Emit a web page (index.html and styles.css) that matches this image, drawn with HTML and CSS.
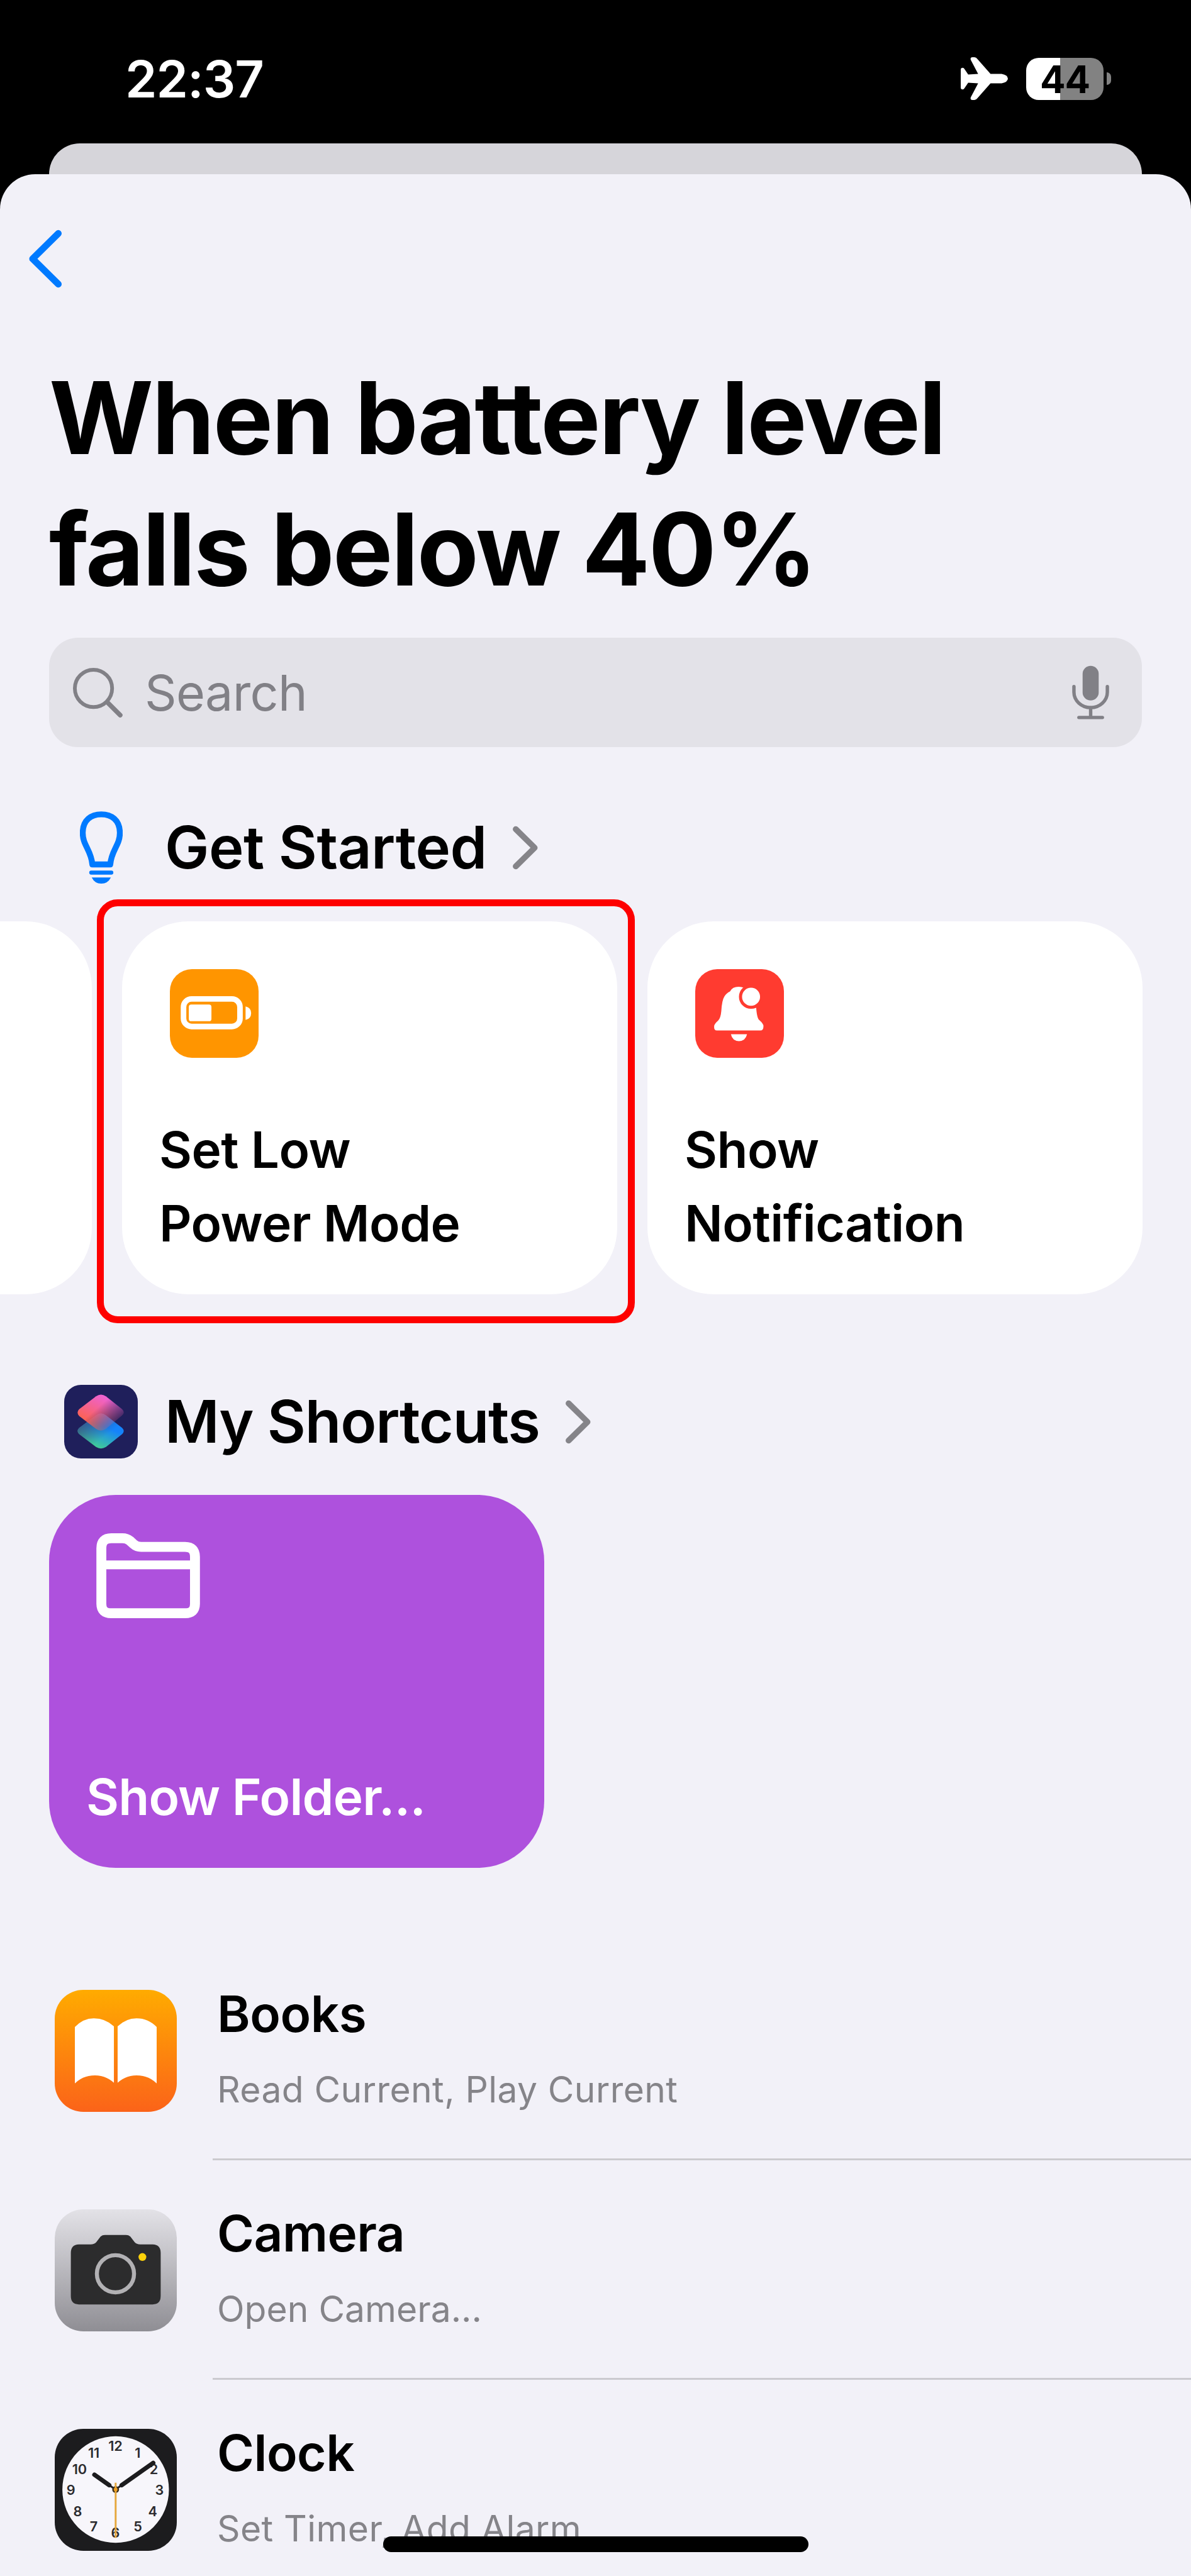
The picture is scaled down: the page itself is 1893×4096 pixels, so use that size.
FILE: index.html
```html
<!DOCTYPE html>
<html lang="en">
<head>
    <meta charset="UTF-8">
    <meta name="viewport" content="width=device-width, initial-scale=1.0">
    <title>Shortcuts - New Automation</title>
    <link rel="stylesheet" href="styles.css">
</head>
<body>
    <div class="phone">
        <header class="status-bar">
            <span class="time">22:37</span>
            <div class="status-icons">
                <svg class="plane" viewBox="0 0 76 69" fill="#fff">
                    <path d="M0 20 Q0 17 3 17 Q5 17 6 19 L12 28 L28 27 L16 4 Q15 0 19 0 L22 0 Q25 0 27 3 L48 27 L66 27 Q76 29 76 34.500 Q76 40 66 42 L48 42 L27 66 Q25 69 22 69 L19 69 Q15 69 16 65 L28 42 L12 41 L6 50 Q5 52 3 52 Q0 52 0 49 Z"/>
                </svg>
                <div class="battery"><span>44</span></div>
                <div class="battery-cap"></div>
            </div>
        </header>
        <div class="back-sheet"></div>

        <main class="sheet">
            <svg class="back" viewBox="0 0 56 94" fill="none" stroke="#007aff" stroke-width="11" stroke-linecap="round" stroke-linejoin="round">
                <path d="M48.500 6 L7 47 L48.500 88"/>
            </svg>

            <h1>When battery level<br>falls below 40%</h1>

            <div class="search">
                <svg class="search-icon" viewBox="0 0 80 80" fill="none" stroke="#818086" stroke-linecap="round">
                    <circle cx="33" cy="33" r="30" stroke-width="6"/>
                    <path d="M55.500 55.500 L76 76" stroke-width="7.500"/>
                </svg>
                <span>Search</span>
                <svg class="mic-icon" viewBox="0 0 60 88" fill="none" stroke="#818086" stroke-width="5.500" stroke-linecap="round">
                    <rect x="17" y="0.500" width="26" height="56" rx="13" fill="#818086" stroke="none"/>
                    <path d="M3 34 V43 A27 25 0 0 0 57 43 V34"/>
                    <path d="M30 68 V82 M11 84 H49"/>
                </svg>
            </div>

            <div class="section-head">
                <div class="head-icon">
                    <svg class="bulb" viewBox="0 0 69 117">
                        <path d="M20 86 C18 62 4 55 4.500 34 C5 14 18 5 34.500 5 C51 5 64 14 64.500 34 C65 55 51 62 49 86 Z" fill="none" stroke="#007aff" stroke-width="9.500" stroke-linejoin="round"/>
                        <rect x="15" y="96" width="39" height="6.500" rx="3.200" fill="#007aff"/>
                        <path d="M19 107 H50 Q45 117 34.500 117 Q24 117 19 107 Z" fill="#007aff"/>
                    </svg>
                </div>
                <h2>Get Started</h2>
                <svg class="chevron" viewBox="0 0 42 71" fill="none" stroke="#858489" stroke-width="9.500" stroke-linecap="round" stroke-linejoin="round">
                    <path d="M5.500 5.500 L36 35.500 L5.500 65.500"/>
                </svg>
            </div>

            <div class="cards">
                <div class="card"></div>
                <div class="card">
                    <div class="card-icon orange">
                        <svg viewBox="0 0 143 143">
                            <rect x="22" y="48" width="91" height="44.500" rx="13" fill="none" stroke="#fff" stroke-width="9"/>
                            <rect x="30.500" y="57" width="36.500" height="27" rx="4" fill="#fff"/>
                            <path d="M122 60 Q131 62 131 71 Q131 80 122 82 Z" fill="#fff"/>
                        </svg>
                    </div>
                    <p>Set Low<br>Power Mode</p>
                    <div class="highlight"></div>
                </div>
                <div class="card">
                    <div class="card-icon red">
                        <svg viewBox="0 0 143 143">
                            <path d="M35 99 Q30 99 30.500 92 Q31 88 37 83 Q41 79 42 68 Q43 50 47 44 Q50 39 56 36 Q60 28.500 70 28.500 Q80 28.500 84 36 Q96 43 98 58 Q99 78 103 82 Q110 88 110 92 Q110 99 105 99 Z" fill="#fff"/>
                            <path d="M57.500 105 H83.500 Q81 116 70.500 116 Q60 116 57.500 105 Z" fill="#fff"/>
                            <circle cx="90" cy="44.500" r="17" fill="#fff" stroke="#ff3b30" stroke-width="5"/>
                        </svg>
                    </div>
                    <p>Show<br>Notification</p>
                </div>
            </div>

            <div class="section-head shortcuts-head">
                <div class="head-icon">
                    <svg class="shortcuts-logo" viewBox="0 0 118 118">
                        <defs>
                            <linearGradient id="pink" x1="0.650" y1="0.050" x2="0.250" y2="0.700">
                                <stop offset="0.100" stop-color="#ee62cf"/>
                                <stop offset="1" stop-color="#fb6258"/>
                            </linearGradient>
                            <linearGradient id="blue" x1="0.800" y1="0.300" x2="0.400" y2="1">
                                <stop offset="0.200" stop-color="#1583fb"/>
                                <stop offset="1" stop-color="#44d090"/>
                            </linearGradient>
                            <linearGradient id="dim" x1="0" y1="0.250" x2="0.500" y2="0.750">
                                <stop offset="0" stop-color="#3a4370" stop-opacity="0.850"/>
                                <stop offset="1" stop-color="#3a4370" stop-opacity="0"/>
                            </linearGradient>
                            <linearGradient id="fade" x1="0.450" y1="0.350" x2="0.900" y2="0.750">
                                <stop offset="0" stop-color="#fff"/>
                                <stop offset="0.600" stop-color="#fff" stop-opacity="0.450"/>
                                <stop offset="1" stop-color="#fff" stop-opacity="0.100"/>
                            </linearGradient>
                            <mask id="top-fade">
                                <path d="M24 39 L51 18.500 Q59 13 67 18.500 L93 39 Q98 44 93 49 L67 70.500 Q59 76 51 70.500 L24 50 Q19 44 24 39 Z" fill="url(#fade)"/>
                            </mask>
                        </defs>
                        <rect width="118" height="118" rx="27" fill="#1f1f5b"/>
                        <path d="M24 69 L51 49 Q59 43 67 49 L93 69 Q98 74 93 79 L67 99.500 Q59 104.500 51 99.500 L24 79 Q19 74 24 69 Z" fill="url(#blue)"/>
                        <path d="M24 69 L51 49 Q59 43 67 49 L93 69 Q98 74 93 79 L67 99.500 Q59 104.500 51 99.500 L24 79 Q19 74 24 69 Z" fill="url(#dim)"/>
                        <rect x="20" y="14" width="78" height="62" fill="url(#pink)" mask="url(#top-fade)"/>
                    </svg>
                </div>
                <h2>My Shortcuts</h2>
                <svg class="chevron" viewBox="0 0 42 71" fill="none" stroke="#858489" stroke-width="9.500" stroke-linecap="round" stroke-linejoin="round">
                    <path d="M5.500 5.500 L36 35.500 L5.500 65.500"/>
                </svg>
            </div>

            <div class="card purple">
                <svg class="folder" viewBox="0 0 167 137" fill="none" stroke="#fff" stroke-width="16">
                    <path d="M8 24 Q8 8 24 8 H42 Q49 8 54 12 L60 17.500 Q65 22 72 22 H143 Q159 22 159 38 V114 Q159 129 143 129 H24 Q8 129 8 114 Z"/>
                    <path d="M8 51 H159" stroke-width="14"/>
                </svg>
                <p>Show Folder...</p>
            </div>

            <ul class="apps">
                <li>
                    <svg class="app-icon" viewBox="0 0 197 197">
                        <defs>
                            <linearGradient id="books" x1="0" y1="0" x2="0" y2="1">
                                <stop offset="0" stop-color="#ffab00"/>
                                <stop offset="1" stop-color="#fb6319"/>
                            </linearGradient>
                        </defs>
                        <rect width="197" height="197" rx="46" fill="url(#books)"/>
                        <path d="M32.500 60 Q46 46 63 46 Q82 46 95.500 59 V150 Q82 138 65 138 Q46 138 32.500 151 Z" fill="#fff"/>
                        <path d="M101.500 59 Q115 46 132 46 Q151 46 164.500 60 V151 Q151 138 132 138 Q115 138 101.500 150 Z" fill="#fff"/>
                    </svg>
                    <div class="app-text">
                        <h3>Books</h3>
                        <p class="wide">Read Current, Play Current</p>
                    </div>
                </li>
                <li>
                    <svg class="app-icon" viewBox="0 0 197 197">
                        <defs>
                            <linearGradient id="camera" x1="0" y1="0" x2="0" y2="1">
                                <stop offset="0" stop-color="#e3e2e7"/>
                                <stop offset="1" stop-color="#8f8e94"/>
                            </linearGradient>
                        </defs>
                        <rect width="197" height="197" rx="46" fill="url(#camera)"/>
                        <path d="M39 56.500 H58 Q64 56.500 67 53 L74 44 Q77 41.500 81 41.500 H115 Q119 41.500 122 44 L129 53 Q132 56.500 138 56.500 H158 Q171 57 171 70 V140 Q171 153.500 158 153.500 H39 Q26 153.500 26 140 V70 Q26 57 39 56.500 Z" fill="#2c2c2d"/>
                        <circle cx="98" cy="104" r="30" fill="none" stroke="#b2b1b4" stroke-width="6.500"/>
                        <circle cx="141.500" cy="77" r="6.300" fill="#fdd20a"/>
                    </svg>
                    <div class="app-text">
                        <h3>Camera</h3>
                        <p>Open Camera...</p>
                    </div>
                </li>
                <li>
                    <svg class="app-icon" viewBox="0 0 197 197">
                        <rect width="197" height="197" rx="46" fill="#1c1c1e"/>
                        <circle cx="98.300" cy="98" r="86" fill="#f7f6fb"/>
                        <g class="numerals">
                            <text x="98" y="36">12</text>
                            <text x="134" y="47">1</text>
                            <text x="160" y="73">2</text>
                            <text x="169" y="106.500">3</text>
                            <text x="158" y="141">4</text>
                            <text x="134" y="166">5</text>
                            <text x="98" y="176">6</text>
                            <text x="63" y="166">7</text>
                            <text x="37" y="141">8</text>
                            <text x="26" y="106.500">9</text>
                            <text x="40" y="73">10</text>
                            <text x="63" y="47">11</text>
                        </g>
                        <path d="M98 98 L64 74 M98 98 L159 55" stroke="#1c1c1e" stroke-width="3" stroke-linecap="round"/>
                        <path d="M88 91 L64 74 M108 91 L159 55" stroke="#1c1c1e" stroke-width="7" stroke-linecap="round"/>
                        <circle cx="98.300" cy="98" r="5.500" fill="#3b2f1e"/>
                        <path d="M98.300 87 V176" stroke="#e5a73d" stroke-width="3"/>
                        <circle cx="98.300" cy="98" r="3" fill="#f0a020"/>
                    </svg>
                    <div class="app-text">
                        <h3>Clock</h3>
                        <p class="wide">Set Timer, Add Alarm</p>
                    </div>
                </li>
            </ul>
        </main>

        <div class="home-bar"></div>
    </div>
</body>
</html>
```
FILE: styles.css
```css
* {
    box-sizing: border-box;
}
body {
    font-family: Inter, "Liberation Sans", sans-serif;
    margin: 0;
    padding: 0;
    background: #000;
    color: #000;
}
h1, h2, h3, p, ul {
    margin: 0;
    padding: 0;
}
svg {
    display: block;
    flex: none;
}
.phone {
    position: relative;
    width: 1893px;
    height: 4096px;
    overflow: hidden;
    background: #000;
}

/* status bar */
.status-bar {
    display: flex;
    justify-content: space-between;
    height: 228px;
    padding: 91px 127px 0 199px;
    color: #fff;
}
.time {
    font-size: 81px;
    font-weight: 600;
    line-height: 70px;
    letter-spacing: -1px;
}
.status-icons {
    display: flex;
    align-items: center;
    height: 68px;
}
.plane {
    width: 75px;
    height: 68px;
    margin-right: 29px;
}
.battery {
    width: 123px;
    height: 67px;
    border-radius: 20px;
    background: linear-gradient(to right, #fff 44%, #828282 44%);
    color: #000;
    font-size: 60px;
    font-weight: 700;
    line-height: 68px;
    letter-spacing: -1px;
    text-align: center;
}
.battery-cap {
    width: 7px;
    height: 20px;
    margin-left: 5px;
    border-radius: 0 7px 7px 0;
    background: #828282;
}

/* sheets */
.back-sheet {
    height: 49px;
    margin: 0 78px;
    border-radius: 49px 49px 0 0;
    background: #d6d5da;
}
.sheet {
    height: 3819px;
    overflow: hidden;
    border-radius: 56px 56px 0 0;
    background: #f2f1f8;
}
.back {
    width: 55px;
    height: 93px;
    margin: 88px 0 0 45px;
}
h1 {
    margin: 102px 0 0 78px;
    font-size: 160px;
    font-weight: 700;
    line-height: 209px;
    letter-spacing: -2.5px;
    white-space: nowrap;
}
.search {
    display: flex;
    align-items: center;
    height: 174px;
    margin: 36px 78px 0;
    padding: 0 52px 0 38px;
    border-radius: 46px;
    background: #e3e2e8;
    color: #818086;
    font-size: 79px;
    letter-spacing: -0.7px;
}
.search-icon {
    width: 79px;
    height: 79px;
    margin-right: 35px;
}
.mic-icon {
    width: 59px;
    height: 87px;
    margin-left: auto;
}

/* section headings */
.section-head {
    display: flex;
    align-items: center;
    height: 117px;
    margin: 101px 0 59px;
    padding-left: 102px;
}
.head-icon {
    display: flex;
    justify-content: center;
    width: 117px;
    margin-right: 43px;
}
.bulb {
    width: 68px;
    height: 115px;
}
.shortcuts-logo {
    width: 117px;
    height: 117px;
}
.section-head h2 {
    font-size: 94px;
    font-weight: 600;
    line-height: 117px;
    letter-spacing: -0.5px;
    white-space: nowrap;
}
.chevron {
    width: 42px;
    height: 70px;
    margin-left: 40px;
}
.shortcuts-head {
    margin: 144px 0 58px;
}
.shortcuts-head h2 {
    letter-spacing: -1.2px;
}

/* cards */
.cards {
    display: flex;
    gap: 48px;
    margin-left: -641px;
}
.card {
    position: relative;
    display: flex;
    flex: none;
    flex-direction: column;
    justify-content: space-between;
    width: 787px;
    height: 593px;
    padding: 76px 59px 55px;
    border-radius: 106px;
    background: #fff;
}
.card p {
    font-size: 80px;
    font-weight: 600;
    line-height: 117px;
    letter-spacing: -0.5px;
    white-space: nowrap;
}
.card-icon {
    width: 141px;
    height: 141px;
    margin-left: 17px;
    border-radius: 35px;
}
.orange {
    background: #ff9500;
}
.red {
    background: #ff3b30;
}
.highlight {
    position: absolute;
    top: -35px;
    left: -40px;
    width: 855px;
    height: 674px;
    border: 11px solid #fe0000;
    border-radius: 33px;
}
.purple {
    margin-left: 78px;
    padding-top: 61px;
    background: #ae51dd;
    color: #fff;
}
.purple p {
    letter-spacing: -0.8px;
}
.folder {
    width: 165px;
    height: 135px;
    margin-left: 16px;
}

/* app list */
.apps {
    margin-top: 116px;
    list-style: none;
}
.apps li {
    display: flex;
    align-items: center;
    height: 349px;
    padding-left: 87px;
}
.app-icon {
    width: 194px;
    height: 194px;
    margin-right: 57px;
}
.app-text {
    flex: 1;
    height: 349px;
    padding: 67px 0 0 7px;
    border-bottom: 3px solid #cbcacf;
    white-space: nowrap;
}
.app-text h3 {
    font-size: 80px;
    font-weight: 600;
    line-height: 97px;
    letter-spacing: -0.5px;
}
.app-text p {
    margin-top: 38px;
    color: #858489;
    font-size: 57px;
    line-height: 69px;
}
.app-text .wide {
    letter-spacing: 0.4px;
}
.numerals {
    fill: #2b2b2e;
    font-size: 22px;
    font-weight: 600;
    text-anchor: middle;
}
.home-bar {
    position: absolute;
    top: 4033px;
    left: 609px;
    width: 676px;
    height: 25px;
    border-radius: 13px;
    background: #000;
}
```
